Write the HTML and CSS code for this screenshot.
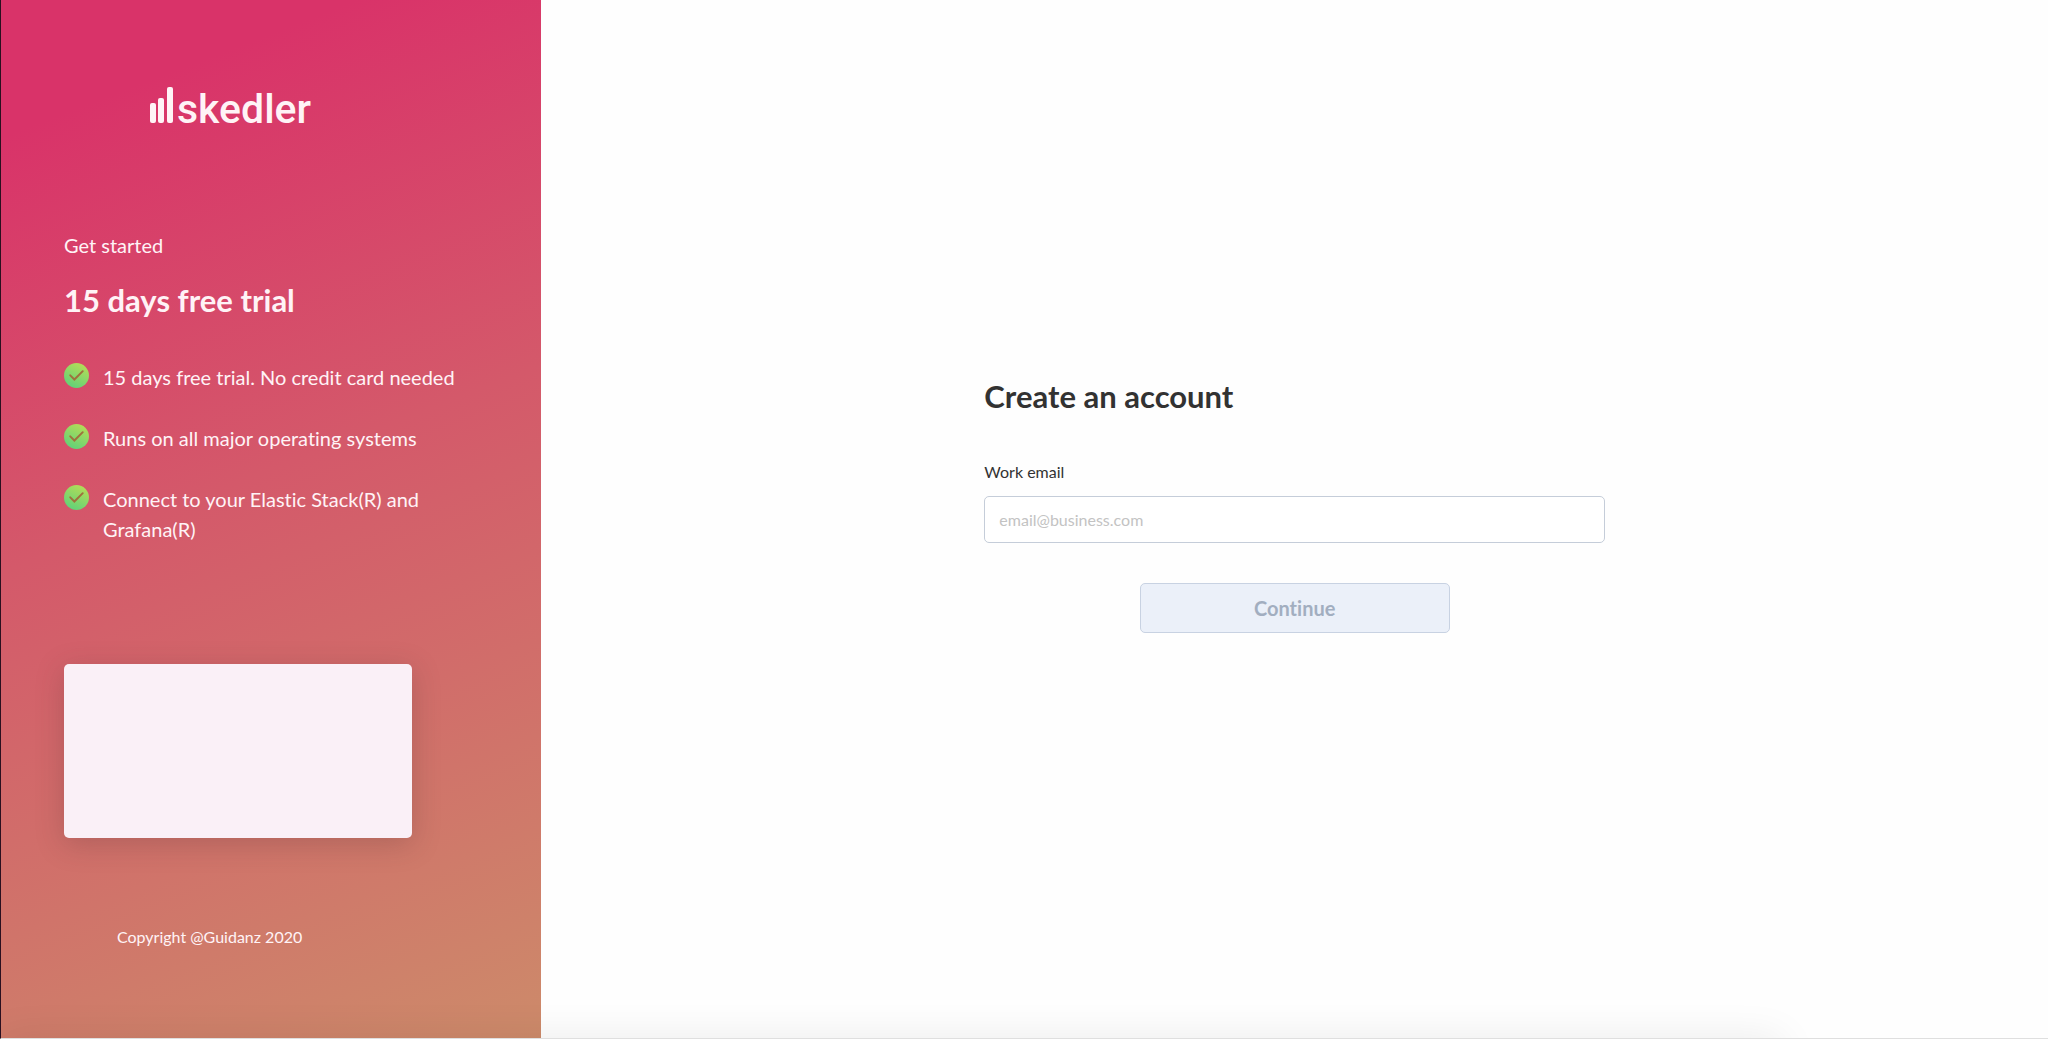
FILE: index.html
```html
<!DOCTYPE html>
<html lang="en">
  <head>
    <meta charset="UTF-8" />
    <meta name="viewport" content="width=device-width, initial-scale=1.0" />
    <title>Skedler - Create an account</title>
    <link rel="stylesheet" href="styles.css">
  </head>
  <body>
    <div class="page">
      <aside class="sidebar">
        <div class="logo">
          <svg class="logo-bars" viewBox="0 0 23 36" fill="currentColor" aria-hidden="true">
            <rect x="0" y="16" width="6" height="20" rx="2" />
            <rect x="8" y="11" width="6" height="25" rx="2" />
            <rect x="17" y="0" width="6" height="36" rx="2" />
          </svg>
          <span class="logo-name">skedler</span>
        </div>

        <p class="intro">Get started</p>
        <h2 class="offer">15 days free trial</h2>

        <!-- shared fill for the check icons -->
        <svg class="defs" aria-hidden="true">
          <linearGradient id="checkFill" x1="0.8" y1="0" x2="0.3" y2="1">
            <stop offset="0" stop-color="#b9dc55" />
            <stop offset="1" stop-color="#5fd279" />
          </linearGradient>
        </svg>

        <ul class="features">
          <li class="feature">
            <svg class="check" viewBox="0 0 26 26" aria-hidden="true">
              <circle cx="13" cy="13" r="13" fill="url(#checkFill)" />
              <path d="M6.5 12.8 L10.8 17.2 L19.5 8.5" />
            </svg>
            <span>15 days free trial. No credit card needed</span>
          </li>
          <li class="feature">
            <svg class="check" viewBox="0 0 26 26" aria-hidden="true">
              <circle cx="13" cy="13" r="13" fill="url(#checkFill)" />
              <path d="M6.5 12.8 L10.8 17.2 L19.5 8.5" />
            </svg>
            <span>Runs on all major operating systems</span>
          </li>
          <li class="feature">
            <svg class="check" viewBox="0 0 26 26" aria-hidden="true">
              <circle cx="13" cy="13" r="13" fill="url(#checkFill)" />
              <path d="M6.5 12.8 L10.8 17.2 L19.5 8.5" />
            </svg>
            <span>Connect to your Elastic Stack(R) and Grafana(R)</span>
          </li>
        </ul>

        <div class="card"></div>

        <p class="copyright">Copyright @Guidanz 2020</p>
      </aside>

      <main class="content">
        <form class="signup">
          <h1 class="title">Create an account</h1>
          <label class="label" for="email">Work email</label>
          <input class="input" id="email" type="email" placeholder="email@business.com" />
          <button class="button" type="submit" disabled>Continue</button>
        </form>
      </main>
    </div>
  </body>
</html>
```

FILE: styles.css
```css
* {
  box-sizing: border-box;
}
body {
  margin: 0;
  font-family: Lato, "Liberation Sans", sans-serif;
  font-variant-ligatures: none;
  color: #323232;
  background-color: #fefefe;
}
h1, h2, p, ul {
  margin: 0;
  padding: 0;
}
.page {
  display: flex;
  min-height: 100vh;
  border-left: 1px solid #2a1020;
  border-bottom: 1px solid rgba(0, 0, 0, 0.12);
  position: relative;
  overflow: hidden;
}
/* soft shadow along the bottom edge */
.page::after {
  content: "";
  position: absolute;
  top: 100%;
  left: 0;
  right: 13%;
  height: 40px;
  box-shadow: 0 0 40px rgba(0, 0, 0, 0.08);
}
.sidebar {
  flex: 0 0 26.4%;
  padding: 84px 64px 40px 63px;
  color: #fff3f6;
  background: linear-gradient(159deg, #d93369 11%, #d4596a 46%, #cc8f6a 105%);
}
.logo {
  display: flex;
  align-items: flex-end;
  gap: 4px;
  height: 39px;
  margin-left: 86px;
}
.logo-bars {
  width: 23px;
  height: 36px;
}
.logo-name {
  font-family: Roboto, sans-serif;
  font-size: 41px;
  font-weight: 500;
  line-height: 28px;
}
.intro {
  margin-top: 107px;
  font-size: 20px;
  line-height: 30px;
}
.offer {
  margin-top: 20px;
  font-size: 31px;
  line-height: 40px;
}
.defs {
  position: absolute;
  width: 0;
  height: 0;
}
.features {
  display: flex;
  flex-direction: column;
  gap: 31px;
  margin-top: 42px;
  list-style: none;
}
.feature {
  display: flex;
  align-items: flex-start;
  gap: 14px;
  font-size: 20px;
  line-height: 30px;
}
.check {
  flex: none;
  width: 25px;
  height: 25px;
  margin-top: 1px;
}
.check path {
  fill: none;
  stroke: #a0703c;
  stroke-width: 2;
  stroke-linecap: round;
}
.card {
  max-width: 348px;
  height: 174px;
  margin-top: 120px;
  border-radius: 5px;
  background-color: #faf0f7;
  box-shadow: 0 6px 28px rgba(80, 50, 50, 0.25);
}
.copyright {
  margin: 87px 0 0 53px;
  font-size: 16px;
  line-height: 24px;
}
.content {
  flex: 1;
  display: flex;
  align-items: center;
  justify-content: center;
  padding-bottom: 29px;
}
.signup {
  display: flex;
  flex-direction: column;
  width: 41.2%;
}
.title {
  font-size: 31px;
  line-height: 40px;
}
.label {
  margin-top: 44px;
  font-size: 16px;
  line-height: 24px;
}
.input {
  height: 47px;
  margin-top: 12px;
  padding: 0 14px;
  border: 1px solid #c5cdd9;
  border-radius: 5px;
  background-color: #fff;
  font-family: inherit;
  font-size: 16px;
}
.input::placeholder {
  color: #c3c3c3;
}
.button {
  align-self: center;
  width: 50%;
  height: 50px;
  margin-top: 40px;
  border: 1px solid #c8d2e2;
  border-radius: 5px;
  background-color: #ebf0f9;
  color: #a2aec0;
  font-family: inherit;
  font-size: 20px;
  font-weight: bold;
  font-variant-ligatures: none;
}
```
